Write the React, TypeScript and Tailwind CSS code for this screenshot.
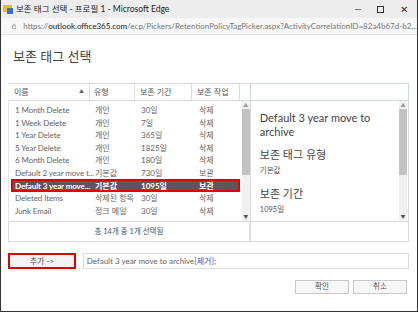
import React from "react";

const rows = [
  ["1 Month Delete", "개인", "30일", "삭제"],
  ["1 Week Delete", "개인", "7일", "삭제"],
  ["1 Year Delete", "개인", "365일", "삭제"],
  ["5 Year Delete", "개인", "1825일", "삭제"],
  ["6 Month Delete", "개인", "180일", "삭제"],
  ["Default 2 year move t...", "기본값", "730일", "보관"],
  ["Default 3 year move...", "기본값", "1095일", "보관"],
  ["Deleted Items", "삭제된 항목", "30일", "삭제"],
  ["Junk Email", "정크 메일", "30일", "삭제"],
];

const font = { fontFamily: 'Lato, "Noto Sans CJK KR", sans-serif' };

function Scrollbar({ thumbTop, thumbH }: { thumbTop: number; thumbH: number }) {
  return (
    <div className="relative w-[8px] h-full bg-[#f0f0f0]">
      <div className="absolute left-0 top-[2px] w-full flex justify-center text-[5px] leading-none text-[#999]">▲</div>
      <div className="absolute left-0 w-full bg-[#c2c2c2]" style={{ top: thumbTop, height: thumbH }} />
      <div className="absolute left-0 bottom-[2px] w-full flex justify-center text-[5px] leading-none text-[#555]">▼</div>
    </div>
  );
}

export default function App() {
  return (
    <div className="w-[418px] h-[313px] bg-white" style={font}>
      <div className="w-[418px] h-[312px] border-l border-r border-b border-[#333] flex flex-col overflow-hidden">
        {/* title bar */}
        <div className="h-[18px] bg-[#ededed] flex items-center pl-[2px]">
          <svg width="10" height="10" viewBox="0 0 10 10" className="mr-[3px]">
            <rect x="0" y="1" width="9" height="7" fill="#e8b838" />
            <rect x="4" y="4" width="6" height="6" fill="#3b6fd1" />
          </svg>
          <span className="text-[8.5px] text-[#222]">보존 태그 선택 - 프로필 1 - Microsoft Edge</span>
          <div className="ml-auto flex items-center text-[#333]">
            <span className="w-[22px] text-center text-[9px]">—</span>
            <span className="w-[22px] flex justify-center">
              <span className="w-[7px] h-[7px] border border-[#333]" />
            </span>
            <span className="w-[26px] text-center text-[10px]">✕</span>
          </div>
        </div>
        {/* address bar */}
        <div className="h-[17px] bg-[#f7f7f7] border-b border-[#e3e3e3] flex items-center pl-[11px]">
          <svg width="8" height="9" viewBox="0 0 8 9" className="mr-[7px]">
            <rect x="0.5" y="3.5" width="7" height="5" fill="none" stroke="#666" strokeWidth="0.8" />
            <path d="M2 3.5 V2 A2 2 0 0 1 6 2 V3.5" fill="none" stroke="#666" strokeWidth="0.8" />
          </svg>
          <span className="text-[8px] text-[#777] whitespace-nowrap">
            https://<span className="text-[#222]">outlook.office365.com</span>/ecp/Pickers/RetentionPolicyTagPicker.aspx?ActivityCorrelationID=82a4b67d-b2...
          </span>
        </div>
        {/* content */}
        <div className="flex-1 flex flex-col pl-[7px] pr-[8px]">
          <div className="h-[48px] pt-[13px] pl-[5px] text-[13px] leading-[16px] text-[#444]">보존 태그 선택</div>
          <div className="flex">
            {/* left table */}
            <div className="w-[243px] flex flex-col">
              <div className="h-[18px] flex border-t border-b border-[#dcdcdc] text-[8px] text-[#555]">
                <div className="w-[82px] border-r border-[#dcdcdc] flex items-center pl-[6px]">
                  이름<span className="ml-auto mr-[5px] text-[5px] text-[#666]">▲</span>
                </div>
                <div className="w-[45px] border-r border-[#dcdcdc] flex items-center pl-[4px]">유형</div>
                <div className="w-[57px] border-r border-[#dcdcdc] flex items-center pl-[5px]">보존 기간</div>
                <div className="w-[48px] border-r border-[#dcdcdc] flex items-center pl-[5px]">보존 작업</div>
                <div className="flex-1" />
              </div>
              <div className="h-[120px] flex border-l border-[#e6e6e6]">
                <div className="flex-1 pt-[3px]">
                  {rows.map((r, i) => {
                    const sel = i === 6;
                    return (
                      <div
                        key={i}
                        className={
                          sel
                            ? "h-[13px] flex items-center text-[8px] bg-[#595959] text-white font-bold border-2 border-[#e00000] mx-[2px]"
                            : "h-[12.5px] flex items-center text-[8px] text-[#666] mx-[2px] border-x-2 border-transparent"
                        }
                      >
                        <div className="w-[79px] pl-[2px] whitespace-nowrap tracking-[-0.1px]">{r[0]}</div>
                        <div className="w-[45px] pl-[3px] whitespace-nowrap">{r[1]}</div>
                        <div className="w-[57px] pl-[4px]">{r[2]}</div>
                        <div className="flex-1 pl-[5px]">{r[3]}</div>
                      </div>
                    );
                  })}
                </div>
                <div className="h-full">
                  <Scrollbar thumbTop={8} thumbH={66} />
                </div>
              </div>
              <div className="h-[21px] border border-[#dcdcdc] flex items-center justify-center text-[7.5px] text-[#555]">
                총 14개 중 1개 선택됨
              </div>
            </div>
            {/* right pane */}
            <div className="w-[160px] flex flex-col">
              <div className="h-[18px] border border-[#cfd8dc] bg-white" />
              <div className="h-[120px] flex border-l border-r border-[#dcdcdc] overflow-hidden">
                <div className="flex-1 pl-[9px] pt-[10px] text-[#444]">
                  <div className="text-[11px] leading-[14px]">Default 3 year move to archive</div>
                  <div className="mt-[9px] text-[11px] leading-[14px]">보존 태그 유형</div>
                  <div className="mt-[3px] text-[7.5px] text-[#555]">기본값</div>
                  <div className="mt-[11px] text-[11px] leading-[14px]">보존 기간</div>
                  <div className="mt-[3px] text-[7.5px] text-[#555]">1095일</div>
                  <div className="mt-[11px] text-[11px] leading-[14px]">보존 작업 유형</div>
                </div>
                <div className="h-full pr-[1px]">
                  <Scrollbar thumbTop={8} thumbH={66} />
                </div>
              </div>
              <div className="h-[21px] border border-[#dcdcdc]" />
            </div>
          </div>
          {/* add row */}
          <div className="mt-[11px] flex items-center">
            <div className="w-[68px] h-[16px] border-2 border-[#e00000] bg-[#f3f3f3] flex items-center justify-center text-[8px] text-[#555]">
              추가 -&gt;
            </div>
            <div className="ml-[7px] w-[328px] h-[16px] border border-[#dcdcdc] flex items-center pl-[3px] text-[8px] text-[#666] whitespace-nowrap">
              Default 3 year move to archive<span className="text-[#3355dd]">[제거]</span>;
            </div>
          </div>
          {/* buttons */}
          <div className="mt-[11px] flex justify-end gap-[4px] pr-[2px]">
            <div className="w-[54px] h-[14px] border border-[#c8c8c8] bg-[#f6f6f6] flex items-center justify-center text-[7.5px] text-[#555]">확인</div>
            <div className="w-[54px] h-[14px] border border-[#c8c8c8] bg-[#f6f6f6] flex items-center justify-center text-[7.5px] text-[#555]">취소</div>
          </div>
        </div>
      </div>
    </div>
  );
}
